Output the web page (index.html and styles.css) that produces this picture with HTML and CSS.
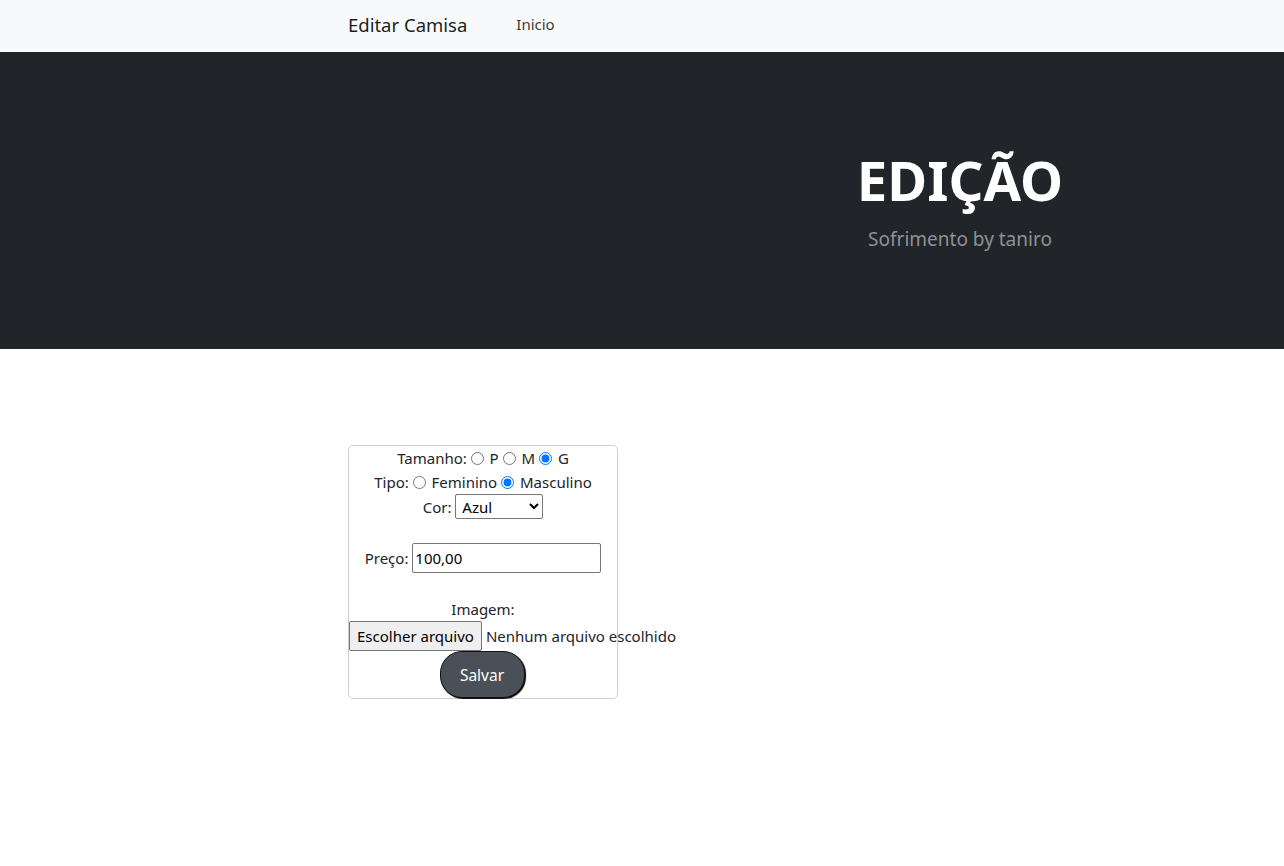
FILE: index.html
```html
<!DOCTYPE html>
<html lang="pt">
<head>
<meta charset="utf-8">
<title>Editar Camisa</title>
<link rel="stylesheet" href="styles.css">
</head>
<body>
<nav class="navbar">
  <div class="nav-inner">
    <a class="brand" href="#">Editar Camisa</a>
    <a class="nav-link" href="#">Inicio</a>
  </div>
</nav>
<header class="hero">
  <div class="hero-inner">
    <div class="hero-spacer"></div>
    <div class="hero-text">
      <h1 class="hero-title">EDIÇÃO</h1>
      <p class="hero-sub">Sofrimento by taniro</p>
    </div>
  </div>
</header>
<main class="main">
  <form class="box">
    <div class="line">Tamanho: <input type="radio" name="t"> P <input type="radio" name="t"> M <input type="radio" name="t" checked> G</div>
    <div class="line">Tipo: <input type="radio" name="g"> Feminino <input type="radio" name="g" checked> Masculino</div>
    <div class="line">Cor: <select class="sel"><option>Azul</option><option>Vermelho</option></select></div>
    <div class="gap"></div>
    <div class="line">Preço: <input class="txt" type="text" value="100,00"></div>
    <div class="gap"></div>
    <div class="line">Imagem:</div>
    <div class="file"><span class="file-btn">Escolher arquivo</span><span class="file-name">Nenhum arquivo escolhido</span></div>
    <div class="line"><button class="save" type="button">Salvar</button></div>
  </form>
</main>
</body>
</html>
```
FILE: styles.css
```css
* { box-sizing: border-box; }
body {
  margin: 0;
  font-family: "Noto Sans", "Open Sans", sans-serif;
  font-size: 15px;
  line-height: 24px;
  color: #212529;
  background: #fff;
}
.navbar {
  background: #f8f9fa;
  height: 52px;
}
.nav-inner {
  width: 588px;
  margin: 0 auto;
  display: flex;
  align-items: center;
  height: 52px;
}
.brand {
  font-size: 18.5px;
  color: rgba(0,0,0,.9);
  text-decoration: none;
  margin-right: 49px;
  margin-top: -2px;
}
.nav-link {
  font-size: 15px;
  color: rgba(0,0,0,.8);
  text-decoration: none;
  margin-top: -4px;
}
.hero {
  background: #212529;
  height: 297px;
}
.hero-inner {
  width: 1140px;
  margin: 0 auto;
  display: grid;
  grid-template-columns: 1fr 504px;
  height: 100%;
  align-items: center;
}
.hero-text {
  text-align: center;
  padding-bottom: 2px;
}
.hero-title {
  margin: 0;
  font-size: 54.5px;
  line-height: 66px;
  font-weight: 700;
  color: #fff;
}
.hero-sub {
  margin: 12px 0 0;
  font-size: 19px;
  line-height: 28px;
  color: #8f9193;
}
.main {
  width: 588px;
  margin: 96px auto 0;
}
.box {
  width: 270px;
  border: 1px solid #d0d0d0;
  border-radius: 5px;
  text-align: center;
}
.line { line-height: 24px; }
.gap { height: 24px; }
input[type=radio] {
  margin: 0 2px 0 0;
  width: 13px;
  height: 13px;
  vertical-align: -1px;
}
.sel {
  font: inherit;
  font-size: 15px;
  width: 88px;
  height: 25px;
  padding: 0 2px;
  border: 1px solid #767676;
  border-radius: 2px;
  background: #fff;
  color: #000;
}
.txt {
  font: inherit;
  width: 189px;
  height: 30px;
  padding: 1px 2px;
  border: 1px solid #767676;
  border-radius: 2px;
  color: #000;
}
.file {
  display: flex;
  white-space: nowrap;
  align-items: center;
  width: 330px;
}
.file-btn {
  display: inline-block;
  background: #efefef;
  border: 1px solid #767676;
  border-radius: 2px;
  padding: 2px 7px;
  line-height: 24px;
  color: #000;
}
.file-name { margin-left: 4px; }
.save {
  font: inherit;
  font-size: 15.5px;
  color: #fff;
  background: #495057;
  border: 1px solid #111;
  border-radius: 22px;
  width: 85px;
  height: 47px;
  margin-left: -2px;
  box-shadow: 1px 1px 1px #000;
  vertical-align: top;
}
```
